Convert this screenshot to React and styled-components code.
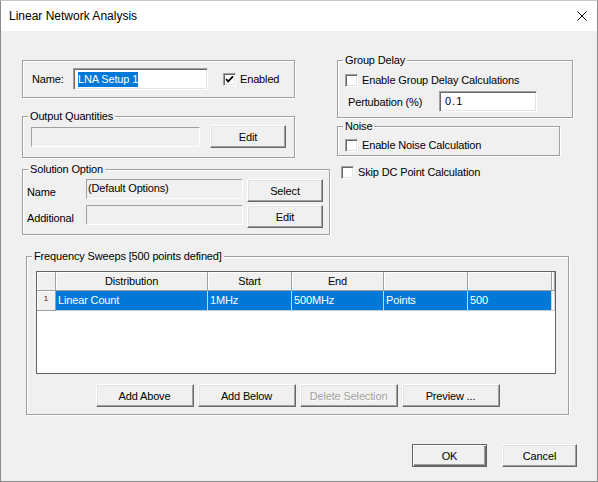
import React from "react";
import styled, { createGlobalStyle } from "styled-components";

const GlobalStyle = createGlobalStyle`
  html, body {
    margin: 0;
    padding: 0;
    background: #fff;
  }
  body {
    font-family: "Liberation Sans", Arial, sans-serif;
    font-size: 11px;
    letter-spacing: -0.15px;
    color: #000;
  }
  * {
    box-sizing: border-box;
  }
`;

const columns = [
  { title: "", width: 19 },
  { title: "Distribution", width: 152 },
  { title: "Start", width: 84 },
  { title: "End", width: 92 },
  { title: "", width: 84 },
  { title: "", width: 84 },
  { title: "", width: 3 },
];

const rows = [["Linear Count", "1MHz", "500MHz", "Points", "500"]];

function App() {
  return (
    <>
      <GlobalStyle />
      <Window>
        <TitleBar>
          <span>Linear Network Analysis</span>
          <CloseIcon viewBox="0 0 10 10">
            <path d="M0.5 0.5 L9.5 9.5 M9.5 0.5 L0.5 9.5" stroke="#000" strokeWidth="1" />
          </CloseIcon>
        </TitleBar>

        <Body>
          <TopSection>
            <Column $width={308}>
              <NameBox>
                <NameLabel>Name:</NameLabel>
                <TextInput $width={135} $height={22}>
                  <Selected>LNA Setup 1</Selected>
                </TextInput>
                <CheckRow $left={15}>
                  <CheckBox $checked />
                  Enabled
                </CheckRow>
              </NameBox>

              <Group $width={273} $top={18}>
                <Caption>Output Quantities</Caption>
                <OutputRow>
                  <DisabledField $width={169} />
                  <Button $width={76}>Edit</Button>
                </OutputRow>
              </Group>

              <Group $width={308} $top={11}>
                <Caption>Solution Option</Caption>
                <SolutionGrid>
                  <RowLabel>Name</RowLabel>
                  <DisabledField $width={157}>(Default Options)</DisabledField>
                  <Button $width={76}>Select</Button>
                  <RowLabel>Additional</RowLabel>
                  <DisabledField $width={157} />
                  <Button $width={76}>Edit</Button>
                </SolutionGrid>
              </Group>
            </Column>

            <Column $width={236}>
              <Group $width={236}>
                <Caption>Group Delay</Caption>
                <CheckRow $left={7} $top={7}>
                  <CheckBox />
                  Enable Group Delay Calculations
                </CheckRow>
                <PerturbRow>
                  <PerturbLabel>Pertubation (%)</PerturbLabel>
                  <TextInput $width={98} $height={21}>
                    <NumberText>0.1</NumberText>
                  </TextInput>
                </PerturbRow>
              </Group>

              <Group $width={223} $top={8}>
                <Caption>Noise</Caption>
                <CheckRow $left={7} $top={6} $bottom={3}>
                  <CheckBox />
                  Enable Noise Calculation
                </CheckRow>
              </Group>

              <CheckRow $left={4} $top={10}>
                <CheckBox />
                Skip DC Point Calculation
              </CheckRow>
            </Column>
          </TopSection>

          <Group $width={543} $top={21} $left={4}>
            <Caption>Frequency Sweeps [500 points defined]</Caption>
            <Table>
              <TableRow $height={19}>
                {columns.map((c, i) => (
                  <HeaderCell key={i}>{c.title}</HeaderCell>
                ))}
              </TableRow>
              {rows.map((r, i) => (
                <TableRow key={i} $height={20}>
                  <RowNumber>{i + 1}</RowNumber>
                  {r.map((v, j) => (
                    <DataCell key={j} $selected>
                      {v}
                    </DataCell>
                  ))}
                  <DataCell />
                </TableRow>
              ))}
            </Table>
            <SweepButtons>
              <Button $width={98}>Add Above</Button>
              <Button $width={98}>Add Below</Button>
              <Button $width={98} disabled>
                Delete Selection
              </Button>
              <Button $width={98}>Preview ...</Button>
            </SweepButtons>
          </Group>

          <DialogButtons>
            <Button $width={75} $primary>
              OK
            </Button>
            <Button $width={75}>Cancel</Button>
          </DialogButtons>
        </Body>
      </Window>
    </>
  );
}

export default App;

const Window = styled.div`
  width: 598px;
  height: 482px;
  display: flex;
  flex-direction: column;
  border: 1px solid #8a8a8a;
  border-top-color: #c8c8c8;
  background: #f0f0f0;
`;

const TitleBar = styled.div`
  height: 30px;
  flex: none;
  display: flex;
  align-items: center;
  justify-content: space-between;
  padding: 0 10px 0 8px;
  background: #fff;
  font-size: 12px;
  letter-spacing: 0;
`;

const CloseIcon = styled.svg`
  width: 10px;
  height: 10px;
`;

const Body = styled.div`
  flex: 1;
  display: flex;
  flex-direction: column;
  padding: 29px 20px 0 21px;
`;

const TopSection = styled.div`
  display: flex;
  align-items: flex-start;
  gap: 7px;
`;

const Column = styled.div`
  width: ${(p) => p.$width}px;
  display: flex;
  flex-direction: column;
  align-items: flex-start;
`;

const etched = `
  border: 1px solid #a0a0a0;
  box-shadow: 1px 1px 0 #fff, inset 1px 1px 0 #fff;
`;

const sunken = `
  border: 1px solid;
  border-color: #a0a0a0 #fff #fff #a0a0a0;
  box-shadow: inset 1px 1px 0 #696969, inset -1px -1px 0 #e3e3e3;
  background: #fff;
`;

const NameBox = styled.div`
  ${etched}
  width: 273px;
  height: 38px;
  display: flex;
  align-items: center;
  padding-left: 9px;
`;

const NameLabel = styled.span`
  width: 41px;
`;

const TextInput = styled.div`
  ${sunken}
  width: ${(p) => p.$width}px;
  height: ${(p) => p.$height}px;
  display: flex;
  align-items: center;
  padding-left: 4px;
`;

const Selected = styled.span`
  background: #0078d7;
  color: #fff;
  line-height: 15px;
`;

const NumberText = styled.span`
  padding-left: 1px;
  margin-top: -2px;
  letter-spacing: 1px;
`;

const Group = styled.div`
  ${etched}
  width: ${(p) => p.$width}px;
  margin-top: ${(p) => p.$top || 0}px;
  margin-left: ${(p) => p.$left || 0}px;
  display: flex;
  flex-direction: column;
`;

const Caption = styled.div`
  align-self: flex-start;
  margin: -7px 0 0 5px;
  padding: 0 2px;
  line-height: 13px;
  background: #f0f0f0;
`;

const OutputRow = styled.div`
  display: flex;
  align-items: flex-start;
  gap: 10px;
  padding: 2px 0 9px 8px;
`;

const DisabledField = styled.div`
  width: ${(p) => p.$width}px;
  height: 20px;
  margin-top: 2px;
  padding: 2px 0 0 1px;
  border: 1px solid;
  border-color: #a0a0a0 #fff #fff #a0a0a0;
  line-height: 13px;
  align-self: start;
`;

const SolutionGrid = styled.div`
  display: grid;
  grid-template-columns: 55px 157px 76px;
  grid-auto-rows: 23px;
  column-gap: 4px;
  row-gap: 3px;
  padding: 3px 0 6px 4px;

  ${DisabledField} {
    margin-top: 0;
  }
`;

const RowLabel = styled.span`
  align-self: center;
  padding-top: 3px;
`;

const Button = styled.button`
  width: ${(p) => p.$width}px;
  height: 23px;
  flex: none;
  padding: 0;
  font-family: inherit;
  font-size: 11px;
  letter-spacing: inherit;
  color: #000;
  background: #f0f0f0;
  border: 1px solid;
  border-color: #fff #696969 #696969 #fff;
  box-shadow: inset -1px -1px 0 #a0a0a0, inset 1px 1px 0 #e3e3e3;

  &:disabled {
    color: #a0a0a0;
    text-shadow: 1px 1px 0 #fff;
  }

  ${(p) =>
    p.$primary &&
    `
    border-color: #646464;
    box-shadow: inset 1px 1px 0 #fff, inset -1px -1px 0 #696969, inset -2px -2px 0 #a0a0a0;
  `}
`;

const CheckRow = styled.div`
  display: flex;
  align-items: center;
  gap: 4px;
  margin: ${(p) => p.$top || 0}px 0 ${(p) => p.$bottom || 0}px ${(p) => p.$left || 0}px;
  line-height: 13px;
`;

const CheckBoxFrame = styled.span`
  ${sunken}
  width: 13px;
  height: 13px;
  flex: none;
  display: flex;
  align-items: center;
  justify-content: center;
`;

function CheckBox({ $checked }) {
  return (
    <CheckBoxFrame>
      {$checked && (
        <svg width="9" height="9" viewBox="0 0 9 9">
          <path d="M1 4 L3.2 6.4 L8 1.4" fill="none" stroke="#000" strokeWidth="1.8" />
        </svg>
      )}
    </CheckBoxFrame>
  );
}

const PerturbRow = styled.div`
  display: flex;
  align-items: center;
  margin: 4px 0 5px 10px;
`;

const PerturbLabel = styled.span`
  width: 91px;
`;

const Table = styled.div`
  width: 520px;
  height: 103px;
  margin: 8px 0 0 9px;
  border: 1px solid #646464;
  background: #fff;
`;

const TableRow = styled.div`
  display: grid;
  grid-template-columns: ${columns.map((c) => `${c.width}px`).join(" ")};
  height: ${(p) => p.$height}px;
`;

const HeaderCell = styled.div`
  background: #f0f0f0;
  border-right: 1px solid #a0a0a0;
  border-bottom: 1px solid #a0a0a0;
  box-shadow: inset 1px 1px 0 #fff;
  text-align: center;
  line-height: 18px;
  overflow: hidden;
`;

const RowNumber = styled(HeaderCell)`
  font-size: 8px;
  line-height: 16px;
  color: #5a1010;
`;

const DataCell = styled.div`
  background: ${(p) => (p.$selected ? "#0078d7" : "#fff")};
  color: ${(p) => (p.$selected ? "#fff" : "#000")};
  border-right: 1px solid #c8d4e0;
  border-bottom: 1px solid #c8c8c8;
  padding-left: 2px;
  line-height: 19px;
  white-space: nowrap;
  overflow: hidden;
`;

const SweepButtons = styled.div`
  display: flex;
  justify-content: center;
  gap: 4px;
  margin-top: 10px;
  padding-bottom: 7px;
`;

const DialogButtons = styled.div`
  display: flex;
  justify-content: flex-end;
  gap: 15px;
  margin-top: 29px;
`;
